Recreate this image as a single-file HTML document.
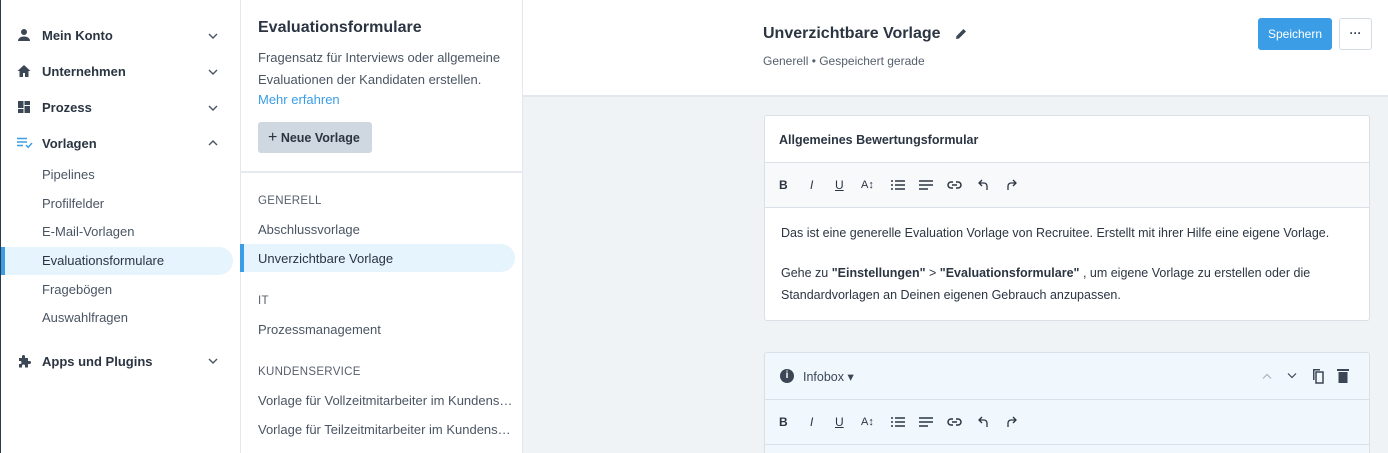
<!DOCTYPE html>
<html><head><meta charset="utf-8"><style>
*{box-sizing:border-box;margin:0;padding:0}
html{width:1388px;height:453px;overflow:hidden;background:#eff3f6}
body{width:1388px;height:453px;overflow:hidden;font-family:"Liberation Sans",sans-serif;color:#2b3542;background:#eff3f6;position:relative;font-size:13px}
.abs{position:absolute}
#side{left:0;top:0;width:241px;height:453px;background:#fff;border-right:1px solid #e3e8ee;border-left:1px solid #2c3a4b}
.it{position:absolute;left:41px;font-weight:bold;font-size:13px;color:#2b3542;line-height:16px}
.ic{position:absolute;left:16px}
.chev{position:absolute;left:206px;width:12px;height:8px}
.sub{position:absolute;left:41px;color:#4a5563;font-size:13px;line-height:16px}
#mid{left:241px;top:0;width:282px;height:453px;background:#fff;border-right:1px solid #e3e8ee}
.m{position:absolute;left:17px;font-size:13px;line-height:16px;color:#4a5563}
.cap{position:absolute;left:17px;font-size:11.5px;color:#555f6c;letter-spacing:.3px}
#head{left:523px;top:0;width:865px;height:97px;background:#fff;border-bottom:2px solid #e3e8ee}
.card{position:absolute;left:764px;width:606px;background:#fff;border:1px solid #d9e0e7;border-radius:3px;overflow:hidden}
.tb{height:45px;background:#f7f9fb;border-bottom:1px solid #d9e0e7;position:relative;font-size:12px;color:#2b3542}
.tb span{position:absolute;top:16px;line-height:12px}
.tb svg{position:absolute;top:16px}
</style></head><body>
<div id="side" class="abs">
 <svg class="ic" style="top:28px" width="14" height="14" viewBox="0 0 14 14"><circle cx="7" cy="4" r="3" fill="#3c4756"/><path d="M1 13c0-3 3-4.5 6-4.5s6 1.5 6 4.5z" fill="#3c4756"/></svg>
 <div class="it" style="top:28px">Mein Konto</div>
 <svg class="ic" style="top:64px" width="14" height="14" viewBox="0 0 14 14"><path d="M7 1L0.5 7H2.5v6h3.5V9h2v4h3.5V7h2z" fill="#3c4756"/></svg>
 <div class="it" style="top:64px">Unternehmen</div>
 <svg class="ic" style="top:100px" width="14" height="14" viewBox="0 0 14 14"><rect x="1" y="1" width="5.5" height="7" fill="#3c4756"/><rect x="7.5" y="1" width="5.5" height="4" fill="#3c4756"/><rect x="1" y="9" width="5.5" height="4" fill="#3c4756"/><rect x="7.5" y="6" width="5.5" height="7" fill="#3c4756"/></svg>
 <div class="it" style="top:100px">Prozess</div>
 <svg class="ic" style="top:137px" width="16" height="12" viewBox="0 0 16 12"><path d="M0 1.5h10M0 5h10M0 8.5h6" stroke="#3a9de6" stroke-width="1.4"/><path d="M9 8l2.2 2.3L15 6" stroke="#3a9de6" stroke-width="1.4" fill="none"/></svg>
 <div class="it" style="top:136px">Vorlagen</div>
 <svg class="ic" style="top:354px" width="15" height="15" viewBox="0 0 15 15"><path d="M2 4h3V2.5a1.5 1.5 0 013 0V4h3v3h1.5a1.5 1.5 0 010 3H11v3.5H8V12a1.5 1.5 0 00-3 0v1.5H2V10h1a1.5 1.5 0 000-3H2z" fill="#3c4756"/></svg>
 <div class="it" style="top:354px">Apps und Plugins</div>
 <svg class="chev" style="top:32px" viewBox="0 0 12 8"><path d="M2 2l4 4 4-4" stroke="#4a5563" stroke-width="1.4" fill="none"/></svg>
 <svg class="chev" style="top:68px" viewBox="0 0 12 8"><path d="M2 2l4 4 4-4" stroke="#4a5563" stroke-width="1.4" fill="none"/></svg>
 <svg class="chev" style="top:104px" viewBox="0 0 12 8"><path d="M2 2l4 4 4-4" stroke="#4a5563" stroke-width="1.4" fill="none"/></svg>
 <svg class="chev" style="top:139px" viewBox="0 0 12 8"><path d="M2 6l4-4 4 4" stroke="#4a5563" stroke-width="1.4" fill="none"/></svg>
 <svg class="chev" style="top:357px" viewBox="0 0 12 8"><path d="M2 2l4 4 4-4" stroke="#4a5563" stroke-width="1.4" fill="none"/></svg>
 <div class="sub" style="top:167px">Pipelines</div>
 <div class="sub" style="top:196px">Profilfelder</div>
 <div class="sub" style="top:224px">E-Mail-Vorlagen</div>
 <div class="abs" style="left:0;top:247px;width:232px;height:28px;background:#e6f4fe;border-radius:0 14px 14px 0;border-left:4px solid #3a9de6"></div>
 <div class="sub" style="top:253px;color:#2b3542">Evaluationsformulare</div>
 <div class="sub" style="top:282px">Fragebögen</div>
 <div class="sub" style="top:310px">Auswahlfragen</div>
</div>
<div id="mid" class="abs">
 <div class="m" style="top:19px;font-size:16px;font-weight:bold;color:#2b3542;line-height:18px">Evaluationsformulare</div>
 <div class="m" style="top:47px;line-height:21.5px;width:265px">Fragensatz für Interviews oder allgemeine Evaluationen der Kandidaten erstellen.</div>
 <div class="m" style="top:92px;color:#3a9de6">Mehr erfahren</div>
 <div class="abs" style="left:17px;top:122px;width:114px;height:31px;background:#cfd8e0;border-radius:3px;font-weight:bold;font-size:12.5px;line-height:31px;padding-left:10px;color:#2b3542"><span style="font-weight:normal;font-size:16px">+</span> Neue Vorlage</div>
 <div class="abs" style="left:0;top:171px;width:282px;height:2px;background:#e6eaef"></div>
 <div class="cap" style="top:195px">GENERELL</div>
 <div class="m" style="top:222px">Abschlussvorlage</div>
 <div class="abs" style="left:-1px;top:244px;width:275px;height:28px;background:#e6f4fe;border-radius:0 14px 14px 0;border-left:4px solid #3a9de6"></div>
 <div class="m" style="top:251px;color:#2b3542">Unverzichtbare Vorlage</div>
 <div class="cap" style="top:295px">IT</div>
 <div class="m" style="top:322px">Prozessmanagement</div>
 <div class="cap" style="top:366px">KUNDENSERVICE</div>
 <div class="m" style="top:393px;white-space:nowrap;width:257px;overflow:hidden;text-overflow:ellipsis">Vorlage für Vollzeitmitarbeiter im Kundenservice</div>
 <div class="m" style="top:422px;white-space:nowrap;width:257px;overflow:hidden;text-overflow:ellipsis">Vorlage für Teilzeitmitarbeiter im Kundenservice</div>
</div>
<div id="head" class="abs">
 <div class="abs" style="left:240px;top:25px;font-size:16px;font-weight:bold;color:#2b3542">Unverzichtbare Vorlage</div>
 <svg class="abs" style="left:431px;top:27px" width="14" height="14" viewBox="0 0 14 14"><path d="M2 12l.5-3 7-7 2.5 2.5-7 7z" fill="#3c4756"/></svg>
 <div class="abs" style="left:240px;top:54px;font-size:12px;color:#555f6c">Generell • Gespeichert gerade</div>
 <div class="abs" style="left:735px;top:18px;width:74px;height:32px;background:#3a9de6;border-radius:3px;color:#fff;font-size:12px;line-height:32px;text-align:center">Speichern</div>
 <div class="abs" style="left:816px;top:18px;width:33px;height:32px;border:1px solid #d4dbe2;border-radius:3px;background:#fff;text-align:center;line-height:28px;font-weight:bold;color:#3c4756;font-size:12px">···</div>
</div>
<div class="card" style="top:115px;height:206px">
 <div style="height:47px;border-bottom:1px solid #d9e0e7;font-weight:bold;font-size:12.5px;padding:17px 0 0 14px">Allgemeines Bewertungsformular</div>
 <div class="tb" id="tb1">
  <span style="left:14px;font-weight:bold">B</span><span style="left:45px;font-style:italic">I</span><span style="left:70px;text-decoration:underline">U</span><span style="left:96px;font-size:11px">A↕</span>
  <svg style="left:126px" width="14" height="12" viewBox="0 0 14 12"><path d="M0 2h2M0 6h2M0 10h2M4 2h10M4 6h10M4 10h10" stroke="#2b3542" stroke-width="1.5"/></svg>
  <svg style="left:154px" width="14" height="12" viewBox="0 0 14 12"><path d="M0 2h14M0 6h14M0 10h9" stroke="#2b3542" stroke-width="1.5"/></svg>
  <svg style="left:182px" width="15" height="12" viewBox="0 0 15 12"><path d="M6 3H4a3 3 0 000 6h2M9 3h2a3 3 0 010 6H9M5 6h5" stroke="#2b3542" stroke-width="1.5" fill="none"/></svg>
  <svg style="left:213px" width="11" height="12" viewBox="0 0 11 12"><path d="M4 1L1 4l3 3M1 4h5a3 3 0 013 3v4" stroke="#2b3542" stroke-width="1.3" fill="none"/></svg>
  <svg style="left:241px" width="11" height="12" viewBox="0 0 11 12"><path d="M7 1l3 3-3 3M10 4H5a3 3 0 00-3 3v4" stroke="#2b3542" stroke-width="1.3" fill="none"/></svg>
 </div>
 <div style="padding:14px 15px 0 16px;font-size:12.5px;line-height:22px;color:#2b3542">Das ist eine generelle Evaluation Vorlage von Recruitee. Erstellt mit ihrer Hilfe eine eigene Vorlage.<br><div style="height:18px"></div>Gehe zu <b>"Einstellungen"</b> &gt; <b>"Evaluationsformulare"</b> , um eigene Vorlage zu erstellen oder die Standardvorlagen an Deinen eigenen Gebrauch anzupassen.</div>
</div>
<div class="card" style="top:352px;height:110px;background:#f0f8fe">
 <div style="height:47px;border-bottom:1px solid #d9e0e7;position:relative">
  <div class="abs" style="left:15px;top:16px;width:14px;height:14px;border-radius:50%;background:#3c4756;color:#fff;font-size:10px;font-weight:bold;text-align:center;line-height:14px">i</div>
  <div class="abs" style="left:38px;top:16px;font-size:12.5px;color:#3c4756">Infobox ▾</div>
  <svg class="abs" style="left:497px;top:20px" width="10" height="7" viewBox="0 0 10 7"><path d="M1 5.5l4-4 4 4" stroke="#aab3bd" stroke-width="1.2" fill="none"/></svg>
  <svg class="abs" style="left:522px;top:19px" width="10" height="7" viewBox="0 0 10 7"><path d="M1 1.5l4 4 4-4" stroke="#3c4756" stroke-width="1.2" fill="none"/></svg>
  <svg class="abs" style="left:545px;top:15px" width="14" height="16" viewBox="0 0 14 16"><path d="M3 1h7v1.5H4.5V12H3z" fill="#3c4756"/><rect x="6" y="4" width="7" height="11" fill="none" stroke="#3c4756" stroke-width="1.5"/></svg>
  <svg class="abs" style="left:572px;top:15px" width="12" height="15" viewBox="0 0 12 15"><rect x="0" y="1" width="12" height="2" fill="#3c4756"/><rect x="1.5" y="4" width="9" height="11" fill="#3c4756"/></svg>
 </div>
 <div class="tb" style="background:#f0f8fe">
  <span style="left:14px;font-weight:bold">B</span><span style="left:45px;font-style:italic">I</span><span style="left:70px;text-decoration:underline">U</span><span style="left:96px;font-size:11px">A↕</span>
  <svg style="left:126px" width="14" height="12" viewBox="0 0 14 12"><path d="M0 2h2M0 6h2M0 10h2M4 2h10M4 6h10M4 10h10" stroke="#2b3542" stroke-width="1.5"/></svg>
  <svg style="left:154px" width="14" height="12" viewBox="0 0 14 12"><path d="M0 2h14M0 6h14M0 10h9" stroke="#2b3542" stroke-width="1.5"/></svg>
  <svg style="left:182px" width="15" height="12" viewBox="0 0 15 12"><path d="M6 3H4a3 3 0 000 6h2M9 3h2a3 3 0 010 6H9M5 6h5" stroke="#2b3542" stroke-width="1.5" fill="none"/></svg>
  <svg style="left:213px" width="11" height="12" viewBox="0 0 11 12"><path d="M4 1L1 4l3 3M1 4h5a3 3 0 013 3v4" stroke="#2b3542" stroke-width="1.3" fill="none"/></svg>
  <svg style="left:241px" width="11" height="12" viewBox="0 0 11 12"><path d="M7 1l3 3-3 3M10 4H5a3 3 0 00-3 3v4" stroke="#2b3542" stroke-width="1.3" fill="none"/></svg>
 </div>
</div>
</body></html>
